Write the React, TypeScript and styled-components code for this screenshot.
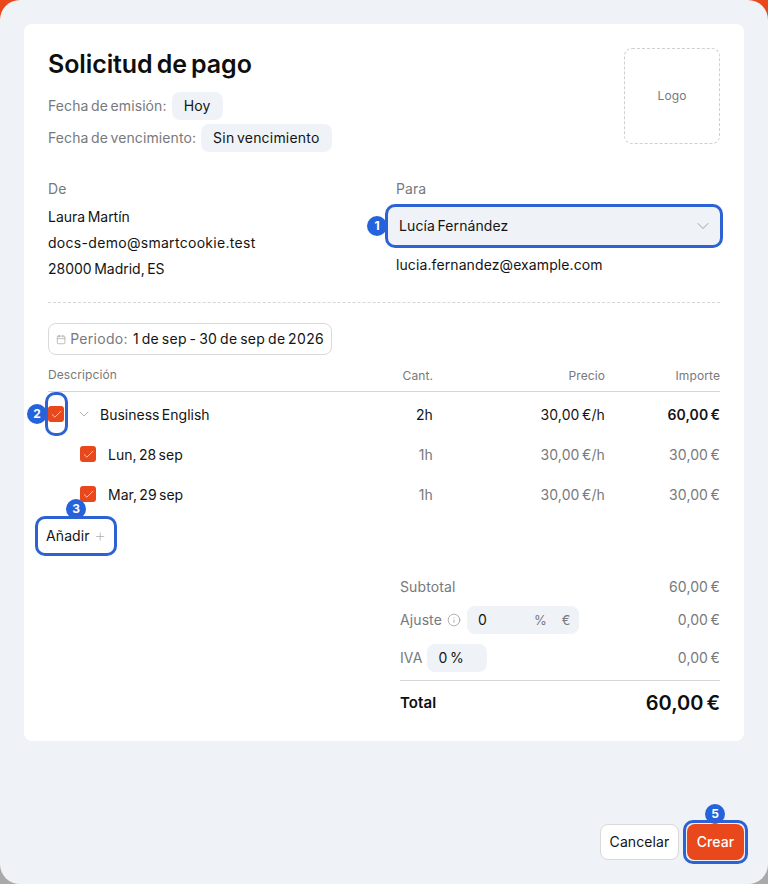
import React from "react";
import styled, { createGlobalStyle } from "styled-components";
import { Calendar, Check, ChevronDown, Info, Plus } from "lucide-react";

const GlobalStyle = createGlobalStyle`
  html, body {
    margin: 0;
    padding: 0;
    background: linear-gradient(#e8481c 50%, #a9a9a9 50%);
  }
  * {
    box-sizing: border-box;
  }
`;

const Modal = styled.div`
  width: 768px;
  height: 884px;
  padding: 24px;
  background: #eff3f7;
  border-radius: 20px;
  display: flex;
  flex-direction: column;
  font-family: Inter, "Liberation Sans", sans-serif;
  font-size: 14px;
  line-height: 20px;
  color: #141414;
  letter-spacing: 0.1px;
  word-spacing: -1.5px;
`;

const Card = styled.div`
  background: #fff;
  border-radius: 8px;
  padding: 24px;
`;

const Header = styled.div`
  display: flex;
  justify-content: space-between;
  align-items: flex-start;
`;

const Title = styled.h1`
  margin: 0 0 12px;
  font-size: 25px;
  line-height: 32px;
  font-weight: 600;
  letter-spacing: -0.1px;
  word-spacing: -2px;
  color: #0e0e0e;
`;

const DateRow = styled.div`
  display: flex;
  align-items: center;
  gap: 5px;
  height: 28px;
  margin-bottom: 4px;
  color: #77797c;
  &:last-child {
    margin-bottom: 0;
  }
`;

const Chip = styled.span`
  height: 28px;
  padding: 0 12px;
  display: inline-flex;
  align-items: center;
  border-radius: 8px;
  background: #eff3f7;
  color: #141414;
  letter-spacing: 0.2px;
`;

const LogoBox = styled.div`
  width: 96px;
  height: 96px;
  border: 1px dashed #cfcfcf;
  border-radius: 8px;
  display: flex;
  align-items: center;
  justify-content: center;
  font-size: 12px;
  color: #77797c;
`;

const Parties = styled.div`
  margin-top: 26px;
  display: grid;
  grid-template-columns: 324px 324px;
  column-gap: 24px;
`;

const Label = styled.div<{ $mb: number }>`
  color: #77797c;
  padding-top: 1px;
  margin-bottom: ${(p) => p.$mb - 1}px;
`;

const AddressLine = styled.div<{ $wide?: boolean }>`
  line-height: 26px;
  letter-spacing: ${(p) => (p.$wide ? "0.3px" : "0")};
`;

const Callout = styled.div`
  position: relative;
`;

const Ring = styled.div<{ $inset: string; $radius?: number }>`
  position: absolute;
  inset: ${(p) => p.$inset};
  border: 3px solid #2c62d4;
  border-radius: ${(p) => p.$radius ?? 10}px;
  pointer-events: none;
`;

const Badge = styled.span<{ $left: number; $top: number }>`
  position: absolute;
  left: ${(p) => p.$left}px;
  top: ${(p) => p.$top}px;
  width: 20px;
  height: 20px;
  border-radius: 50%;
  background: #2563dc;
  color: #fff;
  font-size: 12px;
  font-weight: 700;
  line-height: 20px;
  text-align: center;
  letter-spacing: 0;
`;

const Select = styled.div`
  height: 40px;
  margin: 0 0 0 -9px;
  padding: 0 9px 0 12px;
  width: 335px;
  background: #eff3f7;
  border-radius: 8px;
  display: flex;
  align-items: center;
  justify-content: space-between;
  color: #8d9094;
`;

const SelectText = styled.span`
  color: #141414;
`;

const Email = styled.div`
  margin-top: 9px;
`;

const Separator = styled.div`
  margin-top: 20px;
  border-top: 1px dashed #d6d6d6;
`;

const PeriodButton = styled.div`
  margin-top: 20px;
  width: 284px;
  height: 32px;
  padding: 0 7px;
  display: flex;
  align-items: center;
  gap: 4px;
  border: 1px solid #d9d9d9;
  border-radius: 8px;
  white-space: nowrap;
  color: #9a9c9f;
`;

const PeriodLabel = styled.span`
  color: #77797c;
  letter-spacing: 0.3px;
  margin-right: 1px;
`;

const PeriodValue = styled.span`
  color: #141414;
  letter-spacing: 0.32px;
`;

const TableRow = styled.div<{ $head?: boolean; $muted?: boolean }>`
  display: grid;
  grid-template-columns: 1fr 60px 172px 115px;
  align-items: center;
  height: ${(p) => (p.$head ? "28px" : "40px")};
  margin-top: ${(p) => (p.$head ? "9px" : "0")};
  color: ${(p) => (p.$head || p.$muted ? "#77797c" : "#141414")};
  font-size: ${(p) => (p.$head ? "12px" : "14px")};
  padding: ${(p) => (p.$head ? "0 0 6px" : "0")};
  border-bottom: ${(p) => (p.$head ? "1px solid #d4d6d8" : "none")};
`;

const Rows = styled.div`
  margin-top: 2px;
`;

const Num = styled.div<{ $strong?: boolean }>`
  text-align: right;
  padding-top: 2px;
  font-weight: ${(p) => (p.$strong ? 600 : 400)};
`;

const DescCell = styled.div<{ $child?: boolean }>`
  display: flex;
  align-items: center;
  padding-left: ${(p) => (p.$child ? "32px" : "0")};
  color: #141414;
`;

const Box = styled.span`
  width: 16px;
  height: 16px;
  flex: none;
  border-radius: 3px;
  background: #e8481c;
  color: #fff;
  display: flex;
  align-items: center;
  justify-content: center;
`;

const Toggle = styled.span`
  margin: 0 8px 0 12px;
  width: 16px;
  display: flex;
  color: #8d9094;
`;

const RowText = styled.span<{ $left?: number }>`
  margin-left: ${(p) => p.$left ?? 0}px;
  padding-top: 2px;
  letter-spacing: 0;
`;

const BoxCallout = styled(Callout)`
  display: flex;
`;

const AddCallout = styled(Callout)`
  width: 76px;
  margin: 4px 0 0 -10px;
`;

const AddButton = styled.div`
  height: 36px;
  padding: 0 8px;
  display: flex;
  align-items: center;
  gap: 4px;
  color: #8d9094;
`;

const AddText = styled.span`
  color: #141414;
`;

const Totals = styled.div`
  margin: 19px 0 0 auto;
  width: 320px;
`;

const TotalRow = styled.div<{ $gap: number }>`
  height: 28px;
  margin-bottom: ${(p) => p.$gap}px;
  display: flex;
  align-items: center;
  justify-content: space-between;
  color: #77797c;
`;

const TotalLabel = styled.div<{ $gap: number }>`
  display: flex;
  align-items: center;
  gap: ${(p) => p.$gap}px;
`;

const Field = styled.div<{ $width: number }>`
  width: ${(p) => p.$width}px;
  height: 28px;
  padding: 0 8px 0 11px;
  border-radius: 8px;
  background: #eff3f7;
  display: flex;
  align-items: center;
  color: #141414;
`;

const Unit = styled.span<{ $left: number }>`
  margin-left: ${(p) => p.$left}px;
  color: #77797c;
  font-size: 13px;
`;

const GrandTotal = styled.div`
  margin-top: 8px;
  padding-top: 8px;
  height: 37px;
  border-top: 1px solid #d4d6d8;
  display: flex;
  align-items: center;
  justify-content: space-between;
  font-weight: 600;
  font-size: 15px;
  color: #0e0e0e;
`;

const GrandAmount = styled.span`
  font-size: 20px;
  letter-spacing: 0;
  word-spacing: -2px;
`;

const Footer = styled.div`
  margin-top: auto;
  display: flex;
  justify-content: flex-end;
  gap: 8px;
`;

const CancelButton = styled.div`
  height: 36px;
  width: 79px;
  display: flex;
  align-items: center;
  justify-content: center;
  background: #fff;
  border: 1px solid #d9d9d9;
  border-radius: 8px;
`;

const CreateButton = styled.div`
  height: 36px;
  width: 57px;
  display: flex;
  align-items: center;
  justify-content: center;
  background: #e8481c;
  color: #fff;
  font-weight: 500;
  border-radius: 8px;
`;

const CheckBox = () => (
  <Box>
    <Check size={13} strokeWidth={1.3} />
  </Box>
);

const App: React.FC = () => {
  return (
    <>
      <GlobalStyle />
      <Modal>
        <Card>
          <Header>
            <div>
              <Title>Solicitud de pago</Title>
              <DateRow>
                Fecha de emisión: <Chip>Hoy</Chip>
              </DateRow>
              <DateRow>
                Fecha de vencimiento: <Chip>Sin vencimiento</Chip>
              </DateRow>
            </div>
            <LogoBox>Logo</LogoBox>
          </Header>

          <Parties>
            <div>
              <Label $mb={6}>De</Label>
              <AddressLine>Laura Martín</AddressLine>
              <AddressLine $wide>docs-demo@smartcookie.test</AddressLine>
              <AddressLine>28000 Madrid, ES</AddressLine>
            </div>
            <div>
              <Label $mb={8}>Para</Label>
              <Callout>
                <Select>
                  <SelectText>Lucía Fernández</SelectText>
                  <ChevronDown size={20} strokeWidth={1} />
                </Select>
                <Badge $left={-29} $top={10}>1</Badge>
                <Ring $inset="-2px -3px -2px -11px" />
              </Callout>
              <Email>lucia.fernandez@example.com</Email>
            </div>
          </Parties>

          <Separator />

          <PeriodButton>
            <Calendar size={13} strokeWidth={1.5} />
            <PeriodLabel>Periodo:</PeriodLabel>
            <PeriodValue>1 de sep - 30 de sep de 2026</PeriodValue>
          </PeriodButton>

          <TableRow $head>
            <div>Descripción</div>
            <Num>Cant.</Num>
            <Num>Precio</Num>
            <Num>Importe</Num>
          </TableRow>

          <Rows>
            <TableRow>
              <DescCell>
                <BoxCallout>
                  <CheckBox />
                  <Badge $left={-21} $top={-2}>2</Badge>
                  <Ring $inset="-14px -4px -14px -3px" />
                </BoxCallout>
                <Toggle>
                  <ChevronDown size={16} strokeWidth={1} />
                </Toggle>
                <RowText>Business English</RowText>
              </DescCell>
              <Num>2h</Num>
              <Num>30,00 €/h</Num>
              <Num $strong>60,00 €</Num>
            </TableRow>
            <TableRow $muted>
              <DescCell $child>
                <CheckBox />
                <RowText $left={12}>Lun, 28 sep</RowText>
              </DescCell>
              <Num>1h</Num>
              <Num>30,00 €/h</Num>
              <Num>30,00 €</Num>
            </TableRow>
            <TableRow $muted>
              <DescCell $child>
                <CheckBox />
                <RowText $left={12}>Mar, 29 sep</RowText>
              </DescCell>
              <Num>1h</Num>
              <Num>30,00 €/h</Num>
              <Num>30,00 €</Num>
            </TableRow>
          </Rows>

          <AddCallout>
            <AddButton>
              <AddText>Añadir</AddText>
              <Plus size={13} strokeWidth={1.1} />
            </AddButton>
            <Badge $left={28} $top={-19}>3</Badge>
            <Ring $inset="-2px -3px" />
          </AddCallout>

          <Totals>
            <TotalRow $gap={5}>
              <span>Subtotal</span>
              <span>60,00 €</span>
            </TotalRow>
            <TotalRow $gap={10}>
              <TotalLabel $gap={5.5}>
                Ajuste
                <Info size={14} strokeWidth={1} />
                <Field $width={112}>
                  0
                  <Unit $left={47}>%</Unit>
                  <Unit $left={15}>€</Unit>
                </Field>
              </TotalLabel>
              <span>0,00 €</span>
            </TotalRow>
            <TotalRow $gap={0}>
              <TotalLabel $gap={5}>
                IVA
                <Field $width={60}>0 %</Field>
              </TotalLabel>
              <span>0,00 €</span>
            </TotalRow>
            <GrandTotal>
              <span>Total</span>
              <GrandAmount>60,00 €</GrandAmount>
            </GrandTotal>
          </Totals>
        </Card>

        <Footer>
          <CancelButton>Cancelar</CancelButton>
          <Callout>
            <CreateButton>Crear</CreateButton>
            <Badge $left={18} $top={-20}>5</Badge>
            <Ring $inset="-4px" />
          </Callout>
        </Footer>
      </Modal>
    </>
  );
};

export default App;
